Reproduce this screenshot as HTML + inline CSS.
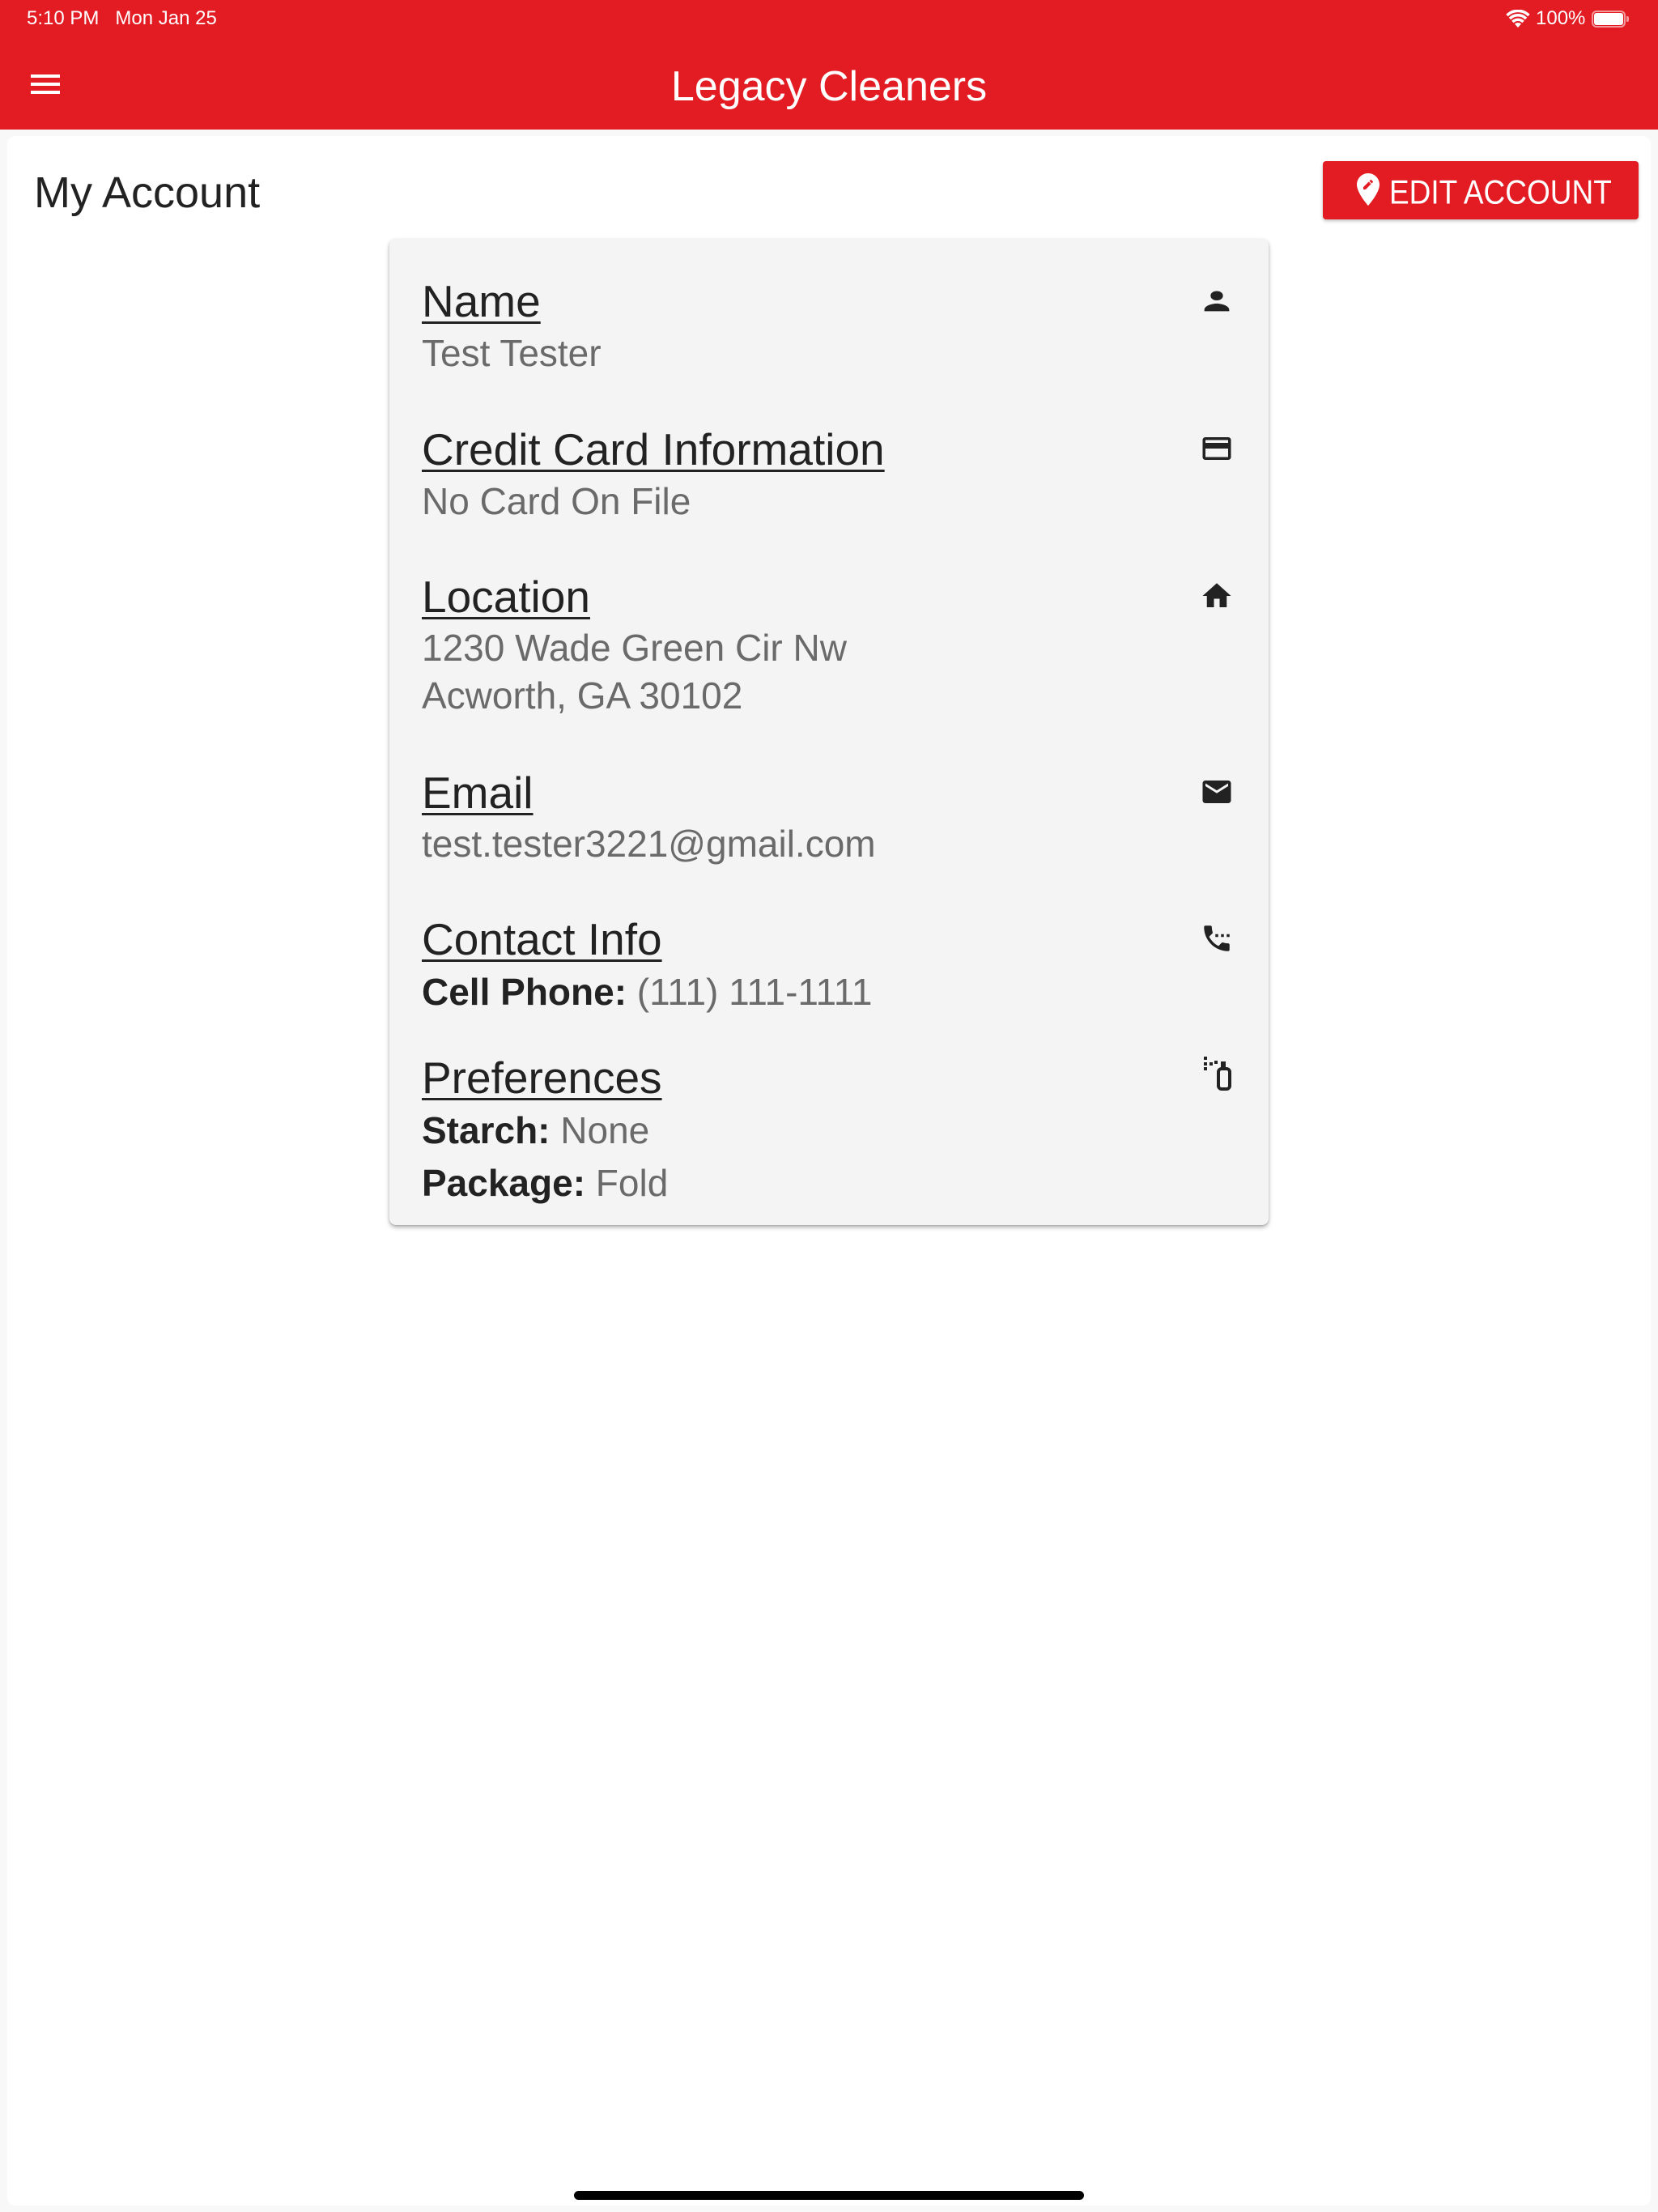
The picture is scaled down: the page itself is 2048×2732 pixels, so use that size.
<!DOCTYPE html>
<html><head><meta charset="utf-8">
<style>
html,body{margin:0;padding:0}
body{width:2048px;height:2732px;background:#f8f8f8;position:relative;overflow:hidden;font-family:"Liberation Sans",sans-serif}
.a{position:absolute;line-height:1;white-space:nowrap}
.hdr{position:absolute;left:0;top:0;width:2048px;height:160px;background:#e31b23}
.panel{position:absolute;left:9px;top:168px;width:2030px;height:2556px;background:#fff;border-radius:10px}
.card{position:absolute;left:481px;top:295px;width:1086px;height:1218px;background:#f4f4f4;border-radius:8px;box-shadow:0 3px 6px rgba(0,0,0,.28),0 1px 2px rgba(0,0,0,.15)}
.h{font-size:55px;color:#222;text-decoration:underline;text-decoration-thickness:3px;text-underline-offset:6px;left:521px}
.v{font-size:46px;color:#6a6a6a;left:521px}
.b{color:#222;font-weight:bold;letter-spacing:0}
.ic{position:absolute;width:42px;height:42px;left:1482px}
</style></head><body>
<div class="hdr"></div>
<div class="a" style="left:33px;top:11px;font-size:24px;color:#fff">5:10 PM&nbsp;&nbsp;&nbsp;Mon Jan 25</div>
<svg style="position:absolute;left:1860px;top:12px" width="30" height="24" viewBox="0 0 30 24"><path d="M15 22 L11 17.5 A6 6 0 0 1 19 17.5 Z" fill="#fff"/><path d="M5 11 A14 14 0 0 1 25 11" stroke="#fff" stroke-width="3.5" fill="none"/><path d="M8.5 15 A9 9 0 0 1 21.5 15" stroke="#fff" stroke-width="3.5" fill="none"/><path d="M1.5 7 A19 19 0 0 1 28.5 7" stroke="#fff" stroke-width="3.5" fill="none"/></svg>
<div class="a" style="left:1897px;top:11px;font-size:24px;color:#fff">100%</div>
<div style="position:absolute;left:1966px;top:13px;width:42px;height:21px;border:2px solid rgba(255,255,255,.55);border-radius:6px;box-sizing:border-box"></div>
<div style="position:absolute;left:1969px;top:16px;width:36px;height:15px;background:#fff;border-radius:3px"></div>
<div style="position:absolute;left:2009px;top:20px;width:3px;height:7px;background:rgba(255,255,255,.55);border-radius:0 2px 2px 0"></div>
<div style="position:absolute;left:38px;top:92px;width:36px;height:4px;background:#fff"></div>
<div style="position:absolute;left:38px;top:102px;width:36px;height:4px;background:#fff"></div>
<div style="position:absolute;left:38px;top:112px;width:36px;height:4px;background:#fff"></div>
<div class="a" style="left:0;width:2048px;text-align:center;top:81px;font-size:52px;color:#fff">Legacy Cleaners</div>

<div class="panel"></div>
<div class="a" style="left:42px;top:211px;font-size:54px;color:#222">My Account</div>
<div style="position:absolute;left:1634px;top:199px;width:390px;height:72px;background:#e31b23;border-radius:4px;box-shadow:0 2px 4px rgba(0,0,0,.25)"></div>
<svg style="position:absolute;left:1666px;top:210px" width="48" height="48" viewBox="0 0 24 24"><path fill="#fff" d="M12 2C8.14 2 5 5.14 5 9c0 5.250 7 13 7 13s7-7.75 7-13c0-3.86-3.14-7-7-7zm-1.56 10H9v-1.44l3.35-3.34 1.43 1.43L10.44 12zm4.45-4.45l-.7.7-1.44-1.44.7-.7c.15-.15.39-.15.54 0l.9.9c.15.15.15.39 0 .54z"/></svg>
<div class="a" style="left:1716px;top:217px;font-size:37px;color:#fff;transform:scaleY(1.12);transform-origin:0 0">EDIT ACCOUNT</div>

<div class="card"></div>
<div class="a h" style="top:345px">Name</div>
<div class="a v" style="top:413px">Test Tester</div>
<div class="a h" style="top:528px">Credit Card Information</div>
<div class="a v" style="top:596px">No Card On File</div>
<div class="a h" style="top:710px">Location</div>
<div class="a v" style="top:777px">1230 Wade Green Cir Nw</div>
<div class="a v" style="top:836px">Acworth, GA 30102</div>
<div class="a h" style="top:952px">Email</div>
<div class="a v" style="top:1019px">test.tester3221@gmail.com</div>
<div class="a h" style="top:1133px">Contact Info</div>
<div class="a v" style="top:1202px"><span class="b">Cell Phone:</span> (111) 111-1111</div>
<div class="a h" style="top:1304px">Preferences</div>
<div class="a v" style="top:1373px"><span class="b">Starch:</span> None</div>
<div class="a v" style="top:1438px"><span class="b">Package:</span> Fold</div>

<svg class="ic" style="top:348px;width:46px;height:46px;left:1480px" viewBox="0 0 24 24"><path fill="#222" d="M12 12c2.21 0 4-1.2 4-3s-1.79-3-4-3-4 1.2-4 3 1.79 3 4 3zm0 2c-2.67 0-8 1.34-8 4v1h16v-1c0-2.66-5.33-4-8-4z"/></svg>
<svg class="ic" style="top:533px" viewBox="0 0 24 24"><path fill="#222" d="M20 4H4c-1.11 0-1.99.89-1.99 2L2 18c0 1.11.89 2 2 2h16c1.11 0 2-.89 2-2V6c0-1.11-.89-2-2-2zm0 14H4v-6h16v6zm0-10H4V6h16v2z"/></svg>
<svg class="ic" style="top:715px" viewBox="0 0 24 24"><path fill="#222" d="M10 20v-6h4v6h5v-8h3L12 3 2 12h3v8z"/></svg>
<svg class="ic" style="top:957px" viewBox="0 0 24 24"><path fill="#222" d="M20 4H4c-1.1 0-1.99.9-1.99 2L2 18c0 1.1.9 2 2 2h16c1.1 0 2-.9 2-2V6c0-1.1-.9-2-2-2zm0 4l-8 5-8-5V6l8 5 8-5v2z"/></svg>
<svg class="ic" style="top:1138px" viewBox="0 0 24 24"><path fill="#222" d="M13 9h-2v2h2V9zm4 0h-2v2h2V9zm3 6.5c-1.25 0-2.45-.2-3.57-.57-.35-.11-.74-.03-1.02.24l-2.2 2.2c-2.83-1.44-5.15-3.75-6.59-6.58l2.2-2.21c.28-.27.36-.66.25-1.01C8.7 6.45 8.5 5.25 8.5 4c0-.55-.45-1-1-1H4c-.55 0-1 .45-1 1 0 9.39 7.61 17 17 17 .55 0 1-.45 1-1v-3.5c0-.55-.45-1-1-1zM19 9v2h2V9h-2z"/></svg>
<svg style="position:absolute;left:1470px;top:1300px" width="70" height="60" viewBox="0 0 70 60"><g fill="#222"><rect x="17" y="5" width="4" height="4"/><rect x="17" y="12" width="4" height="4"/><rect x="24" y="12" width="4" height="4"/><rect x="30" y="10" width="4" height="4"/><rect x="17" y="18" width="4" height="4"/><rect x="38" y="11" width="6" height="8"/></g><rect x="35" y="20" width="14" height="25" rx="4" fill="none" stroke="#222" stroke-width="4"/></svg>

<div style="position:absolute;left:709px;top:2706px;width:630px;height:11px;background:#000;border-radius:6px"></div>
</body></html>
